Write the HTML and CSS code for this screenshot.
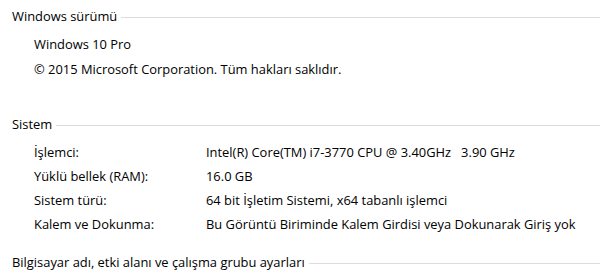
FILE: index.html
```html
<!DOCTYPE html>
<html lang="tr">
<head>
<meta charset="utf-8">
<link rel="stylesheet" href="styles.css">
</head>
<body>
<div class="page">
  <section class="group group-first">
    <div class="group-head"><span class="group-title">Windows sürümü</span><span class="rule"></span></div>
    <div class="plain">
      <div class="line">Windows 10 Pro</div>
      <div class="line">© 2015 Microsoft Corporation. Tüm hakları saklıdır.</div>
    </div>
  </section>
  <section class="group group-system">
    <div class="group-head"><span class="group-title">Sistem</span><span class="rule"></span></div>
    <div class="props">
      <div class="label">İşlemci:</div><div class="value">Intel(R) Core(TM) i7-3770 CPU @ 3.40GHz&nbsp;&nbsp; 3.90 GHz</div>
      <div class="label">Yüklü bellek (RAM):</div><div class="value">16.0 GB</div>
      <div class="label">Sistem türü:</div><div class="value">64 bit İşletim Sistemi, x64 tabanlı işlemci</div>
      <div class="label">Kalem ve Dokunma:</div><div class="value">Bu Görüntü Biriminde Kalem Girdisi veya Dokunarak Giriş yok</div>
    </div>
  </section>
  <section class="group group-last">
    <div class="group-head"><span class="group-title">Bilgisayar adı, etki alanı ve çalışma grubu ayarları</span><span class="rule"></span></div>
  </section>
</div>
</body>
</html>
```

FILE: styles.css
```css
html, body {
  margin: 0;
  padding: 0;
  background: #ffffff;
}
body {
  font-family: "Open Sans", "Noto Sans", sans-serif;
  font-size: 12.9px;
  color: #000000;
  width: 600px;
  height: 272px;
  overflow: hidden;
}
.page {
  padding-top: 4px;
}
.group-head {
  display: flex;
  align-items: center;
  height: 24px;
  padding-left: 12px;
}
.group-title {
  white-space: nowrap;
  line-height: 24px;
}
.rule {
  flex: 1;
  height: 1px;
  margin-left: 4px;
  margin-top: 2px;
  background: #dcdcdc;
}
.plain {
  padding-left: 34px;
  margin-top: 4px;
}
.line {
  line-height: 25px;
  white-space: nowrap;
}
.group-system {
  margin-top: 30px;
}
.props {
  display: grid;
  grid-template-columns: 172px 1fr;
  padding-left: 34px;
  margin-top: 4px;
  line-height: 24px;
  white-space: nowrap;
}
.group-last {
  margin-top: 14px;
}
```
